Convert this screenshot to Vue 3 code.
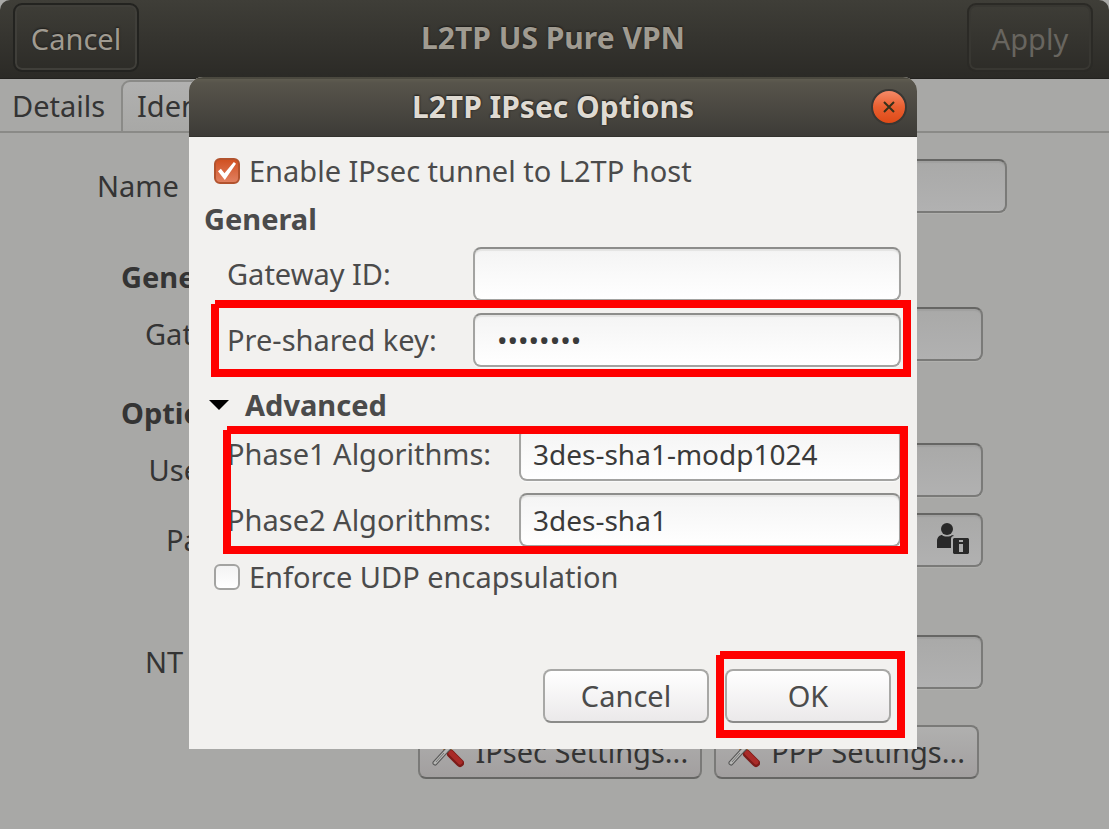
<script setup>
import { ref } from 'vue'

const name = ref('')
const gateway = ref('')
const userName = ref('')
const password = ref('')
const ntDomain = ref('')

const tunnelEnabled = ref(true)
const gatewayId = ref('')
const presharedKey = ref('abcdefgh')
const phase1 = ref('3des-sha1-modp1024')
const phase2 = ref('3des-sha1')
const forceUdp = ref(false)
</script>

<template>
  <div class="window">
    <header class="titlebar">
      <button type="button" class="bar-button">Cancel</button>
      <h1>L2TP US Pure VPN</h1>
      <button type="button" class="bar-button" disabled>Apply</button>
    </header>

    <nav class="tabs">
      <button type="button" class="tab">Details</button>
      <button type="button" class="tab active">Identity</button>
    </nav>

    <main class="form">
      <div class="row name-row">
        <label for="name">Name</label>
        <input id="name" v-model="name" type="text" class="field" />
      </div>

      <h2>General</h2>
      <div class="row">
        <label for="gateway">Gateway:</label>
        <input id="gateway" v-model="gateway" type="text" class="field" />
      </div>

      <h2 class="optional">Optional</h2>
      <div class="row right">
        <label for="user">User name:</label>
        <input id="user" v-model="userName" type="text" class="field" />
      </div>
      <div class="row right password-row">
        <label for="password">Password:</label>
        <div class="with-icon">
          <input id="password" v-model="password" type="password" class="field" />
          <svg class="user-icon" viewBox="0 0 34 34" aria-hidden="true">
            <circle cx="11" cy="7" r="6" />
            <path d="M1 26v-7c0-4 3-6 5-6 2 2 8 2 10 0 1 0 2 1 2 1-2 0-3 1-3 3v9H2z" />
            <path fill-rule="evenodd" d="M18 16h14l1 1v14l-1 1H18l-1-1V17zM23 18v2h4v-2zM23 22v8h4v-8z" />
          </svg>
        </div>
      </div>
      <div class="row right domain-row">
        <label for="domain">NT Domain:</label>
        <input id="domain" v-model="ntDomain" type="text" class="field" />
      </div>

      <div class="settings">
        <button v-for="label in ['IPsec Settings...', 'PPP Settings...']" :key="label" type="button" class="button tool-button">
          <svg viewBox="0 0 32 32" aria-hidden="true">
            <path d="M6 4L14 12" stroke="#777" stroke-width="3" />
            <path d="M10 12l5-4 9 10-6 4z" fill="#b8701f" />
            <path d="M19 18L28 27" stroke="#7c1b19" stroke-width="8" stroke-linecap="round" />
            <path d="M19 17L28 26" stroke="#a92b28" stroke-width="5" stroke-linecap="round" />
            <path d="M3 27L14 15L25 4" stroke="#555" stroke-width="5" stroke-linecap="round" fill="none" />
            <path d="M3 27L14 15L25 4" stroke="#b5b5b3" stroke-width="3" stroke-linecap="round" fill="none" />
            <path d="M4 26L12 17" stroke="#777" stroke-width="1" />
          </svg>
          <span>{{ label }}</span>
        </button>
      </div>
    </main>

    <section class="dialog" role="dialog" aria-labelledby="dialog-title">
      <header class="dialog-bar">
        <h1 id="dialog-title">L2TP IPsec Options</h1>
        <button type="button" class="close" aria-label="Close">
          <svg viewBox="0 0 12 12" aria-hidden="true"><path d="M1 1L11 11M11 1L1 11" stroke="#35301a" stroke-width="2" /></svg>
        </button>
      </header>

      <div class="dialog-body">
        <label class="check"><input v-model="tunnelEnabled" type="checkbox" />Enable IPsec tunnel to L2TP host</label>

        <h2>General</h2>
        <div class="pair">
          <label for="gateway-id">Gateway ID:</label>
          <input id="gateway-id" v-model="gatewayId" type="text" class="field" />
        </div>
        <div class="pair key-pair marked">
          <label for="psk">Pre-shared key:</label>
          <input id="psk" v-model="presharedKey" type="password" class="field secret" />
        </div>

        <button type="button" class="expander" aria-expanded="true">
          <svg viewBox="0 0 20 10" aria-hidden="true"><path d="M0 0H20L10 10z" /></svg>
          Advanced
        </button>
        <div class="algorithms marked">
          <div class="pair wide">
            <label for="phase1">Phase1 Algorithms:</label>
            <input id="phase1" v-model="phase1" type="text" class="field" />
          </div>
          <div class="pair wide">
            <label for="phase2">Phase2 Algorithms:</label>
            <input id="phase2" v-model="phase2" type="text" class="field" />
          </div>
        </div>
        <label class="check udp"><input v-model="forceUdp" type="checkbox" />Enforce UDP encapsulation</label>

        <footer class="actions">
          <button type="button" class="button">Cancel</button>
          <div class="confirm marked"><button type="button" class="button">OK</button></div>
        </footer>
      </div>
    </section>
  </div>
</template>

<style>
body {
  background: #a8a8a6;
}
</style>

<style scoped>
.window,
.window * {
  box-sizing: border-box;
}

.window {
  position: relative;
  min-height: 100vh;
  overflow: hidden;
  background: #a8a8a6;
  color: #343434;
  font-family: "Noto Sans", "Open Sans", sans-serif;
  font-size: 29px;
  line-height: 36px;
}

button,
input {
  margin: 0;
  font: inherit;
  color: inherit;
}

h1,
h2 {
  margin: 0;
  font-size: 29px;
  line-height: 36px;
  font-weight: 700;
}

h1 {
  font-size: 30px;
}

label {
  white-space: nowrap;
}

.titlebar {
  display: grid;
  grid-template-columns: 126px 1fr 126px;
  padding: 3px 16px 6px 13px;
  border-bottom: 1px solid #22211e;
  border-radius: 10px 10px 0 0;
  background: linear-gradient(#3f3e38, #2b2a26);
  color: #a09b91;
  text-align: center;
  text-shadow: 0 -1px 2px #1b1a18;
}

.titlebar h1 {
  align-self: center;
}

.bar-button {
  height: 69px;
  padding: 2px 0 0;
  border: 2px solid #232320;
  border-radius: 9px;
  background: transparent;
  box-shadow: inset 0 0 0 2px #403f3a;
  text-shadow: inherit;
}

.bar-button:disabled {
  border-color: #2b2a26;
  box-shadow: inset 0 0 0 2px #383732;
  color: #68655f;
  text-shadow: none;
}

.tabs {
  display: flex;
  height: 54px;
  padding-top: 1px;
  border-bottom: 2px solid #8a8a87;
}

.tab {
  width: 121px;
  padding: 0 0 0 12px;
  border: 0;
  background: none;
  text-align: left;
}

.tab.active {
  width: 140px;
  padding: 0 0 2px 14px;
  border: 2px solid #8a8a87;
  border-bottom: 0;
  border-radius: 9px 9px 0 0;
  background: linear-gradient(#b1b1b0, #a8a8a6);
}

.form {
  padding: 26px 126px 50px 121px;
}

.form h2 {
  margin: 46px 0 12px;
}

.form h2.optional {
  margin-top: 34px;
}

.row {
  display: grid;
  grid-template-columns: 160px 1fr;
  gap: 12px;
  align-items: center;
  padding-left: 24px;
}

.row.right label {
  text-align: right;
}

.name-row {
  grid-template-columns: 80px 1fr;
  margin: 0 -24px;
  padding: 0;
}

.password-row {
  margin-top: 16px;
}

.domain-row {
  margin-top: 68px;
}

.field {
  display: block;
  width: 100%;
  min-width: 0;
  height: 54px;
  padding: 0 12px;
  border: 2px solid #7a7a78;
  border-top-color: #666664;
  border-radius: 8px;
  outline: 0;
  background: linear-gradient(#a9a9a8, #b1b1b1);
  box-shadow: inset 0 2px 1px #a0a09f, 0 1px 1px #b1b1af;
  font-size: 28px;
}

.with-icon {
  position: relative;
}

.user-icon {
  position: absolute;
  top: 9px;
  right: 13px;
  width: 34px;
  height: 34px;
  fill: #292929;
}

.settings {
  display: flex;
  justify-content: flex-end;
  gap: 12px;
  margin-top: 36px;
  padding-right: 4px;
}

.button {
  display: block;
  height: 54px;
  padding: 0;
  border: 2px solid #a8a8a6;
  border-bottom-color: #8b8b89;
  border-radius: 8px;
  background: linear-gradient(#ffffff, #ebe9ea);
}

.tool-button {
  display: flex;
  align-items: center;
  gap: 11px;
  padding: 0 12px;
  border-color: #7a7a78;
  border-bottom-color: #666664;
  background: linear-gradient(#b0b0af, #a29f9f);
}

.tool-button svg {
  width: 32px;
  height: 32px;
  fill: none;
}

.dialog {
  position: absolute;
  top: 77px;
  right: 192px;
  left: 189px;
  overflow: hidden;
  border-radius: 14px 14px 0 0;
  background: #f2f1ef;
  color: #4b4b4b;
}

.dialog-bar {
  display: flex;
  align-items: center;
  justify-content: center;
  position: relative;
  height: 60px;
  padding-bottom: 2px;
  border-top: 2px solid #4b493f;
  border-bottom: 1px solid #33322e;
  background: linear-gradient(#5f5c50, #57544b 4px, #3d3b37);
  color: #dfdad2;
  text-shadow: 0 0 2px #22211e, 0 -1px 2px #22211e;
}

.close {
  display: flex;
  align-items: center;
  justify-content: center;
  position: absolute;
  top: 10px;
  right: 10px;
  width: 36px;
  height: 36px;
  padding: 0;
  border: 2px solid #393733;
  border-radius: 50%;
  background: linear-gradient(#f58a68, #e95f30 50%, #df4a17);
}

.close svg {
  width: 12px;
  height: 12px;
}

.dialog-body {
  padding: 16px 16px 26px 15px;
}

.check {
  display: flex;
  align-items: center;
  gap: 9px;
  padding-left: 10px;
}

.check input {
  appearance: none;
  width: 26px;
  height: 26px;
  border: 2px solid #a3a3a1;
  border-radius: 6px;
  background: linear-gradient(#f3f3f3, #ffffff);
}

.check input:checked {
  position: relative;
  border-color: #b2532e;
  background: linear-gradient(#d15122, #e18060);
}

.check input:checked::after {
  content: "";
  position: absolute;
  inset: 2px;
  background: #ffffff;
  clip-path: polygon(0 52%, 16% 38%, 36% 62%, 88% 0, 100% 10%, 38% 100%);
}

.dialog h2 {
  margin: 12px 0 10px;
}

.pair {
  display: grid;
  grid-template-columns: 246px 1fr;
  align-items: center;
  padding-left: 23px;
}

.pair.wide {
  grid-template-columns: 292px 1fr;
}

.key-pair,
.pair + .pair {
  margin-top: 12px;
}

.dialog .field {
  border-color: #a3a3a1;
  border-top-color: #8d8d8b;
  background: linear-gradient(#f4f4f4, #ffffff);
  box-shadow: inset 0 2px 1px #e4e4e3, 0 1px 1px #fafafa;
  color: #3a3a3a;
}

.dialog .secret {
  padding-left: 22px;
}

.expander {
  display: flex;
  align-items: center;
  gap: 16px;
  margin-top: 20px;
  padding: 0 0 0 5px;
  border: 0;
  background: none;
  font-weight: 700;
}

.expander svg {
  width: 20px;
  height: 10px;
  fill: #000000;
}

.algorithms {
  margin-top: 4px;
}

.udp {
  margin-top: 12px;
}

.actions {
  display: flex;
  justify-content: flex-end;
  gap: 16px;
  margin-top: 74px;
  padding-right: 10px;
}

.actions .button {
  width: 166px;
}

.marked {
  position: relative;
}

.marked::after {
  content: "";
  position: absolute;
  border: 8px solid #ff0000;
  clip-path: polygon(4px 0, 100% 0, 100% 100%, 0 100%, 0 4px, 4px 4px);
  pointer-events: none;
}

.key-pair::after {
  inset: -13px -10px -10px 7px;
}

.algorithms::after {
  inset: -1px -7px -7px 19px;
}

.confirm::after {
  inset: -18px -14px -15px -9px;
}
</style>
